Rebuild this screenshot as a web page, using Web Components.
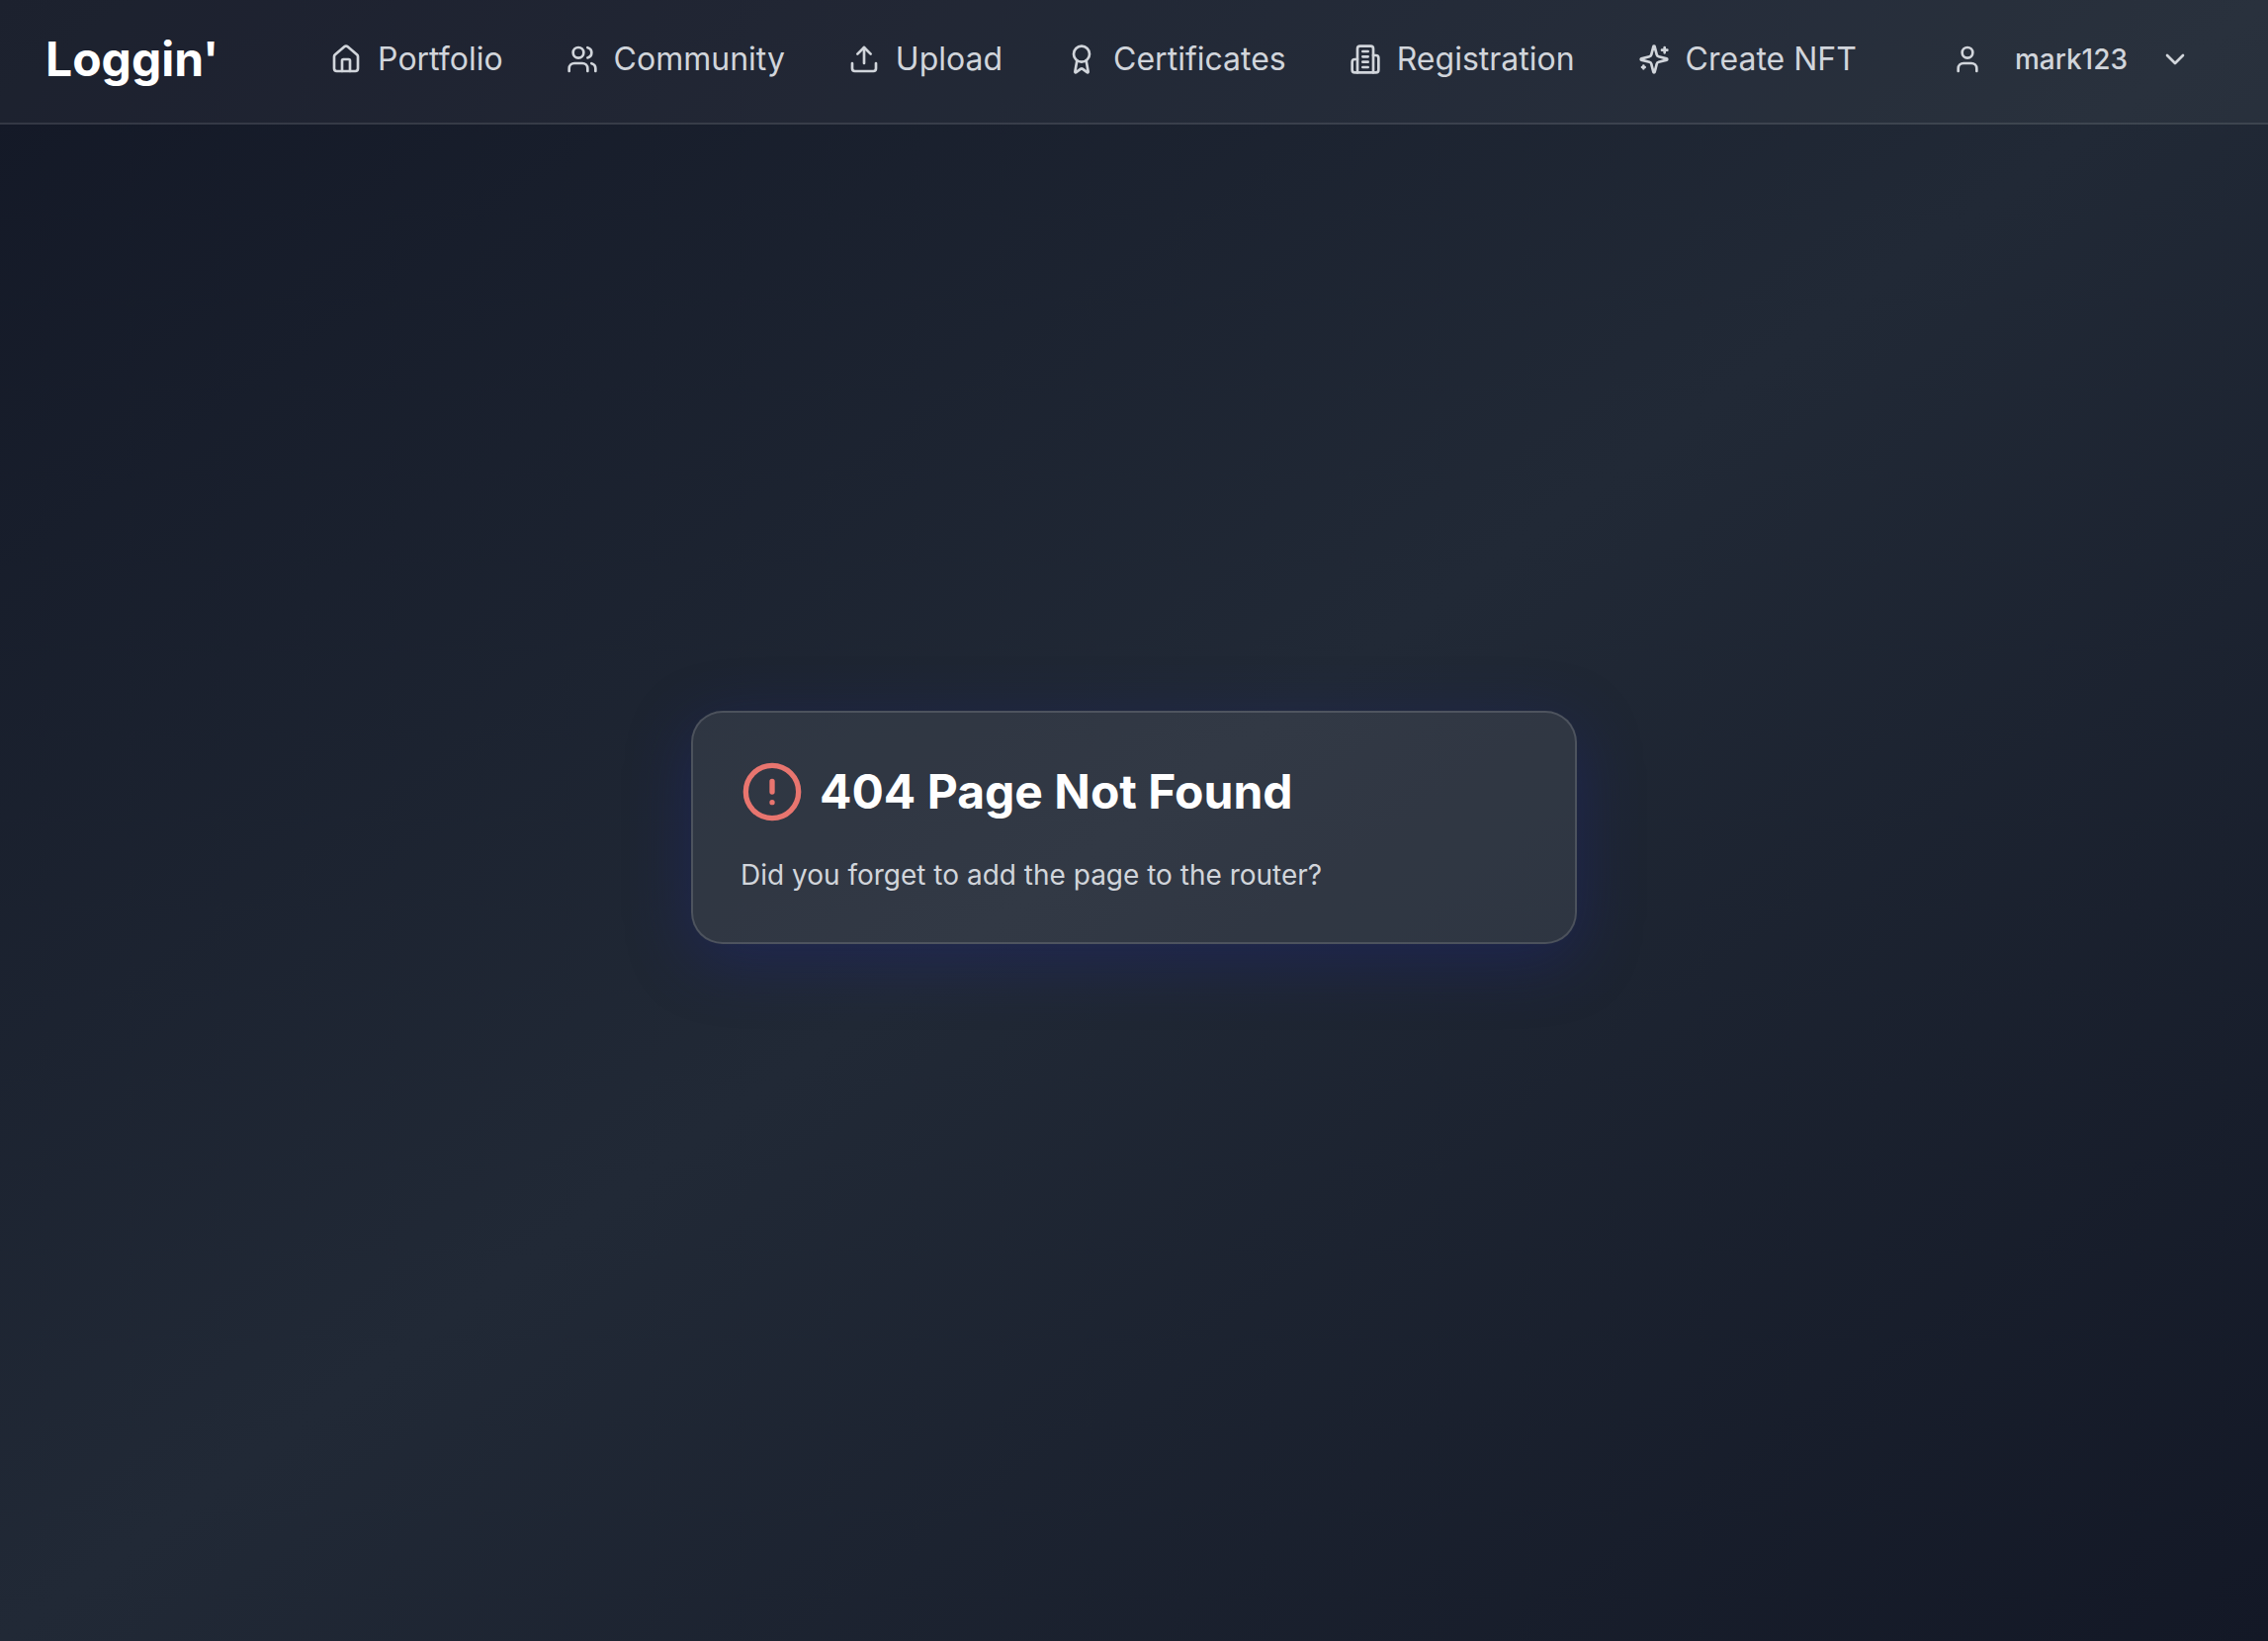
<!DOCTYPE html>
<html lang="en">
<head>
<meta charset="utf-8">
<meta name="viewport" content="width=device-width, initial-scale=1">
<title>Loggin'</title>
<style>
  html, body { margin: 0; }
  body { font-family: Inter, "Liberation Sans", sans-serif; color: #fff; background: #131826; }
</style>
</head>
<body>
<app-shell>
  <site-header slot="header">
    <nav-link icon="house" href="#portfolio">Portfolio</nav-link>
    <nav-link icon="users" href="#community">Community</nav-link>
    <nav-link icon="upload" href="#upload">Upload</nav-link>
    <nav-link icon="award" href="#certificates">Certificates</nav-link>
    <nav-link icon="building" href="#registration">Registration</nav-link>
    <nav-link icon="sparkles" href="#create-nft">Create NFT</nav-link>
    <user-menu slot="user">mark123</user-menu>
  </site-header>
  <error-card>
    <span slot="title">404 Page Not Found</span>
    Did you forget to add the page to the router?
  </error-card>
</app-shell>
<script>
const ICONS = {
  house: '<path d="M15 21v-8a1 1 0 0 0-1-1h-4a1 1 0 0 0-1 1v8"/><path d="M3 10a2 2 0 0 1 .709-1.528l7-5.999a2 2 0 0 1 2.582 0l7 5.999A2 2 0 0 1 21 10v9a2 2 0 0 1-2 2H5a2 2 0 0 1-2-2z"/>',
  users: '<path d="M16 21v-2a4 4 0 0 0-4-4H6a4 4 0 0 0-4 4v2"/><circle cx="9" cy="7" r="4"/><path d="M22 21v-2a4 4 0 0 0-3-3.87"/><path d="M16 3.13a4 4 0 0 1 0 7.75"/>',
  upload: '<path d="M21 15v4a2 2 0 0 1-2 2H5a2 2 0 0 1-2-2v-4"/><path d="M17 8l-5-5-5 5"/><path d="M12 3v12"/>',
  award: '<path d="m15.477 12.89 1.515 8.526a.5.5 0 0 1-.81.47l-3.58-2.687a1 1 0 0 0-1.197 0l-3.586 2.686a.5.5 0 0 1-.81-.469l1.514-8.526"/><circle cx="12" cy="8" r="6"/>',
  building: '<path d="M6 22V4a2 2 0 0 1 2-2h8a2 2 0 0 1 2 2v18Z"/><path d="M6 12H4a2 2 0 0 0-2 2v6a2 2 0 0 0 2 2h2"/><path d="M18 9h2a2 2 0 0 1 2 2v9a2 2 0 0 1-2 2h-2"/><path d="M10 6h4M10 10h4M10 14h4M10 18h4"/>',
  sparkles: '<path d="M9.937 15.5A2 2 0 0 0 8.5 14.063l-6.135-1.582a.5.5 0 0 1 0-.962L8.5 9.936A2 2 0 0 0 9.937 8.5l1.582-6.135a.5.5 0 0 1 .963 0L14.063 8.5A2 2 0 0 0 15.5 9.937l6.135 1.581a.5.5 0 0 1 0 .964L15.5 14.063a2 2 0 0 0-1.437 1.437l-1.582 6.135a.5.5 0 0 1-.963 0z"/><path d="M20 3v4M22 5h-4M4 17v2M5 18H3"/>',
  user: '<path d="M19 21v-2a4 4 0 0 0-4-4H9a4 4 0 0 0-4 4v2"/><circle cx="12" cy="7" r="4"/>',
  chevron: '<path d="m6 9 6 6 6-6"/>',
  alert: '<circle cx="12" cy="12" r="10"/><path d="M12 8v4M12 16h.01"/>'
};

class BaseElement extends HTMLElement {
  constructor() {
    super();
    this.attachShadow({ mode: 'open' }).innerHTML = this.template();
  }
}

customElements.define('ui-icon', class extends HTMLElement {
  static observedAttributes = ['name'];
  constructor() { super(); this.attachShadow({ mode: 'open' }); }
  attributeChangedCallback() {
    this.shadowRoot.innerHTML = `
      <style>
        :host { display: block; flex: none; width: var(--icon-size, 32px); height: var(--icon-size, 32px); }
        svg { display: block; width: 100%; height: 100%; fill: none; stroke: currentColor;
              stroke-width: 2; stroke-linecap: round; stroke-linejoin: round; }
      </style>
      <svg viewBox="0 0 24 24" aria-hidden="true">${ICONS[this.getAttribute('name')] || ''}</svg>`;
  }
});

customElements.define('app-shell', class extends BaseElement {
  template() {
    return `
      <style>
        :host { display: flex; flex-direction: column; min-height: 100vh;
                background: linear-gradient(to bottom right, #131826, #212936, #131826); }
        main { flex: 1; display: flex; align-items: center; justify-content: center; padding: 0 32px 112px; }
      </style>
      <slot name="header"></slot>
      <main><slot></slot></main>`;
  }
});

customElements.define('site-header', class extends BaseElement {
  template() {
    return `
      <style>
        :host { display: block; background: rgba(255,255,255,.04); border-bottom: 2px solid rgba(255,255,255,.1); }
        header { display: flex; align-items: center; justify-content: space-between; padding: 24px 46px 28px; }
        .logo { color: #fff; font-size: 48px; line-height: 72px; font-weight: 700; text-decoration: none; }
        .menu, nav { display: flex; align-items: center; gap: 64px; }
      </style>
      <header>
        <a class="logo" href="#home">Loggin'</a>
        <div class="menu">
          <nav aria-label="Main"><slot></slot></nav>
          <slot name="user"></slot>
        </div>
      </header>`;
  }
});

customElements.define('nav-link', class extends BaseElement {
  template() {
    return `
      <style>
        :host { display: block; }
        a { display: flex; align-items: center; gap: 16px; color: #d1d5db; font-size: 32px; line-height: 48px;
            text-decoration: none; white-space: nowrap; }
      </style>
      <a><ui-icon></ui-icon><span><slot></slot></span></a>`;
  }
  connectedCallback() {
    this.shadowRoot.querySelector('a').href = this.getAttribute('href');
    this.shadowRoot.querySelector('ui-icon').setAttribute('name', this.getAttribute('icon'));
  }
});

customElements.define('user-menu', class extends BaseElement {
  template() {
    return `
      <style>
        :host { display: block; }
        button { display: flex; align-items: center; gap: 32px; margin: 0; padding: 16px 32px; border: 0;
                 background: none; color: #d1d5db; font: 500 28px/40px Inter, "Liberation Sans", sans-serif; }
      </style>
      <button type="button" aria-haspopup="menu">
        <ui-icon name="user"></ui-icon><span><slot></slot></span><ui-icon name="chevron"></ui-icon>
      </button>`;
  }
});

customElements.define('error-card', class extends BaseElement {
  template() {
    return `
      <style>
        :host { display: block; box-sizing: border-box; width: 100%; max-width: 896px; padding: 48px;
                border: 2px solid rgba(255,255,255,.14); border-radius: 32px;
                background: rgba(255,255,255,.08);
                box-shadow: 0 16px 64px rgba(31,38,135,.37); }
        .head { display: flex; align-items: center; gap: 16px; }
        ui-icon { --icon-size: 64px; color: #e8756f; }
        h1 { margin: 0; font-size: 48px; line-height: 64px; font-weight: 700; }
        p { margin: 32px 0 0; color: #d1d5db; font-size: 28px; line-height: 40px; }
      </style>
      <div class="head"><ui-icon name="alert"></ui-icon><h1><slot name="title"></slot></h1></div>
      <p><slot></slot></p>`;
  }
});
</script>
</body>
</html>
